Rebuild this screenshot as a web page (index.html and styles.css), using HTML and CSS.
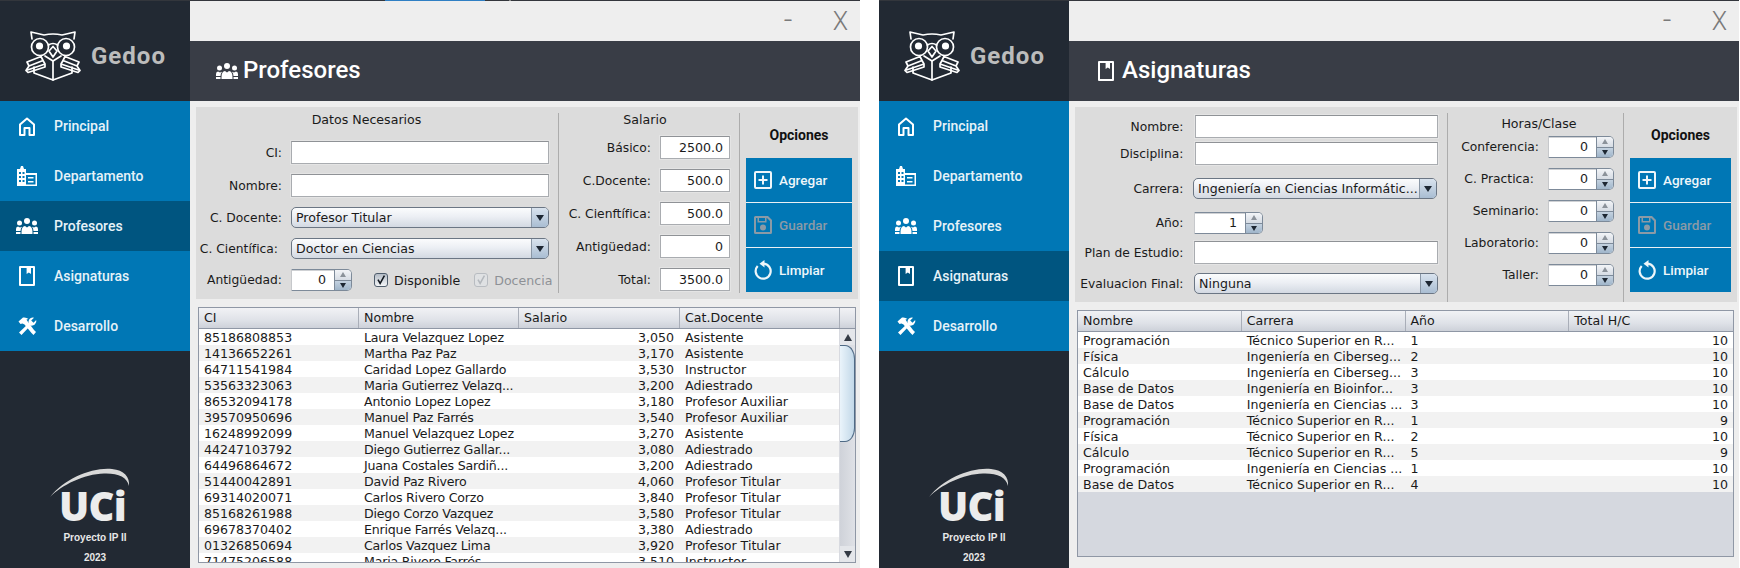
FILE: index.html
```html
<!DOCTYPE html>
<html lang="es">
<head>
<meta charset="utf-8">
<title>Gedoo</title>
<link rel="stylesheet" href="styles.css">
</head>
<body>
<svg class="defs" xmlns="http://www.w3.org/2000/svg">
  <symbol id="i-owl" viewBox="0 0 56 50">
    <g fill="none" stroke="currentColor" stroke-width="1.7" stroke-linejoin="round" stroke-linecap="round">
      <path d="M7 8 L6 1 L19 4 Q28 2 37 4 L50 1 L49 8"/>
      <circle cx="15" cy="16" r="8.5"/>
      <circle cx="41" cy="16" r="8.5"/>
      <path d="M23.5 14 Q28 11 32.5 14 M24 20 L28 15.5 L32 20 L28 26 Z"/>
      <path d="M9 36 V42 L28 49 L47 42 V36"/>
      <path d="M28 30 V49"/>
      <path d="M20 25 L28 30 L36 25"/>
      <path d="M2 31 L16 25.500 L18 29.500 L4 35 Z M4 35 L18 29.500 L20 33 L1 39.500 Z M1 39.500 L20 33 L20 36 L3 41.500 Z"/>
      <path d="M54 31 L40 25.500 L38 29.500 L52 35 Z M52 35 L38 29.500 L36 33 L55 39.500 Z M55 39.500 L36 33 L36 36 L53 41.500 Z"/>
    </g>
    <circle cx="14.500" cy="15" r="3.600" fill="currentColor"/>
    <circle cx="41.500" cy="15" r="3.600" fill="currentColor"/>
  </symbol>
  <symbol id="i-home" viewBox="0 0 18 19">
    <path d="M2 18 V7.5 L9 1.5 L16 7.5 V18 H11.5 V11 H6.5 V18 Z" fill="none" stroke="currentColor" stroke-width="2" stroke-linejoin="round"/>
  </symbol>
  <symbol id="i-building" viewBox="0 0 20 20">
    <path fill="currentColor" fill-rule="evenodd" d="M3 3 L4 0 H6 L7 3 H9 V7 H20 V20 H0 V3 Z M2 6 V8 H4 V6 Z M5.5 6 V8 H7.5 V6 Z M2 10 V12 H4 V10 Z M5.5 10 V12 H7.5 V10 Z M2 14 V16 H4 V14 Z M5.5 14 V16 H7.5 V14 Z M9 9 V18.5 H18.5 V9 Z M11 11 H16.500 V12.500 H11 Z M11 15 H16.500 V16.500 H11 Z"/>
  </symbol>
  <symbol id="i-users" viewBox="0 0 22 16">
    <g fill="currentColor">
      <circle cx="11" cy="3" r="3"/>
      <circle cx="3.500" cy="5" r="2.500"/>
      <circle cx="18.500" cy="5" r="2.500"/>
      <path d="M5.500 16 V14 Q5.500 8.500 9 8 L11 9.500 L13 8 Q16.500 8.500 16.500 14 V16 Z"/>
      <path d="M0 13 V11 Q0 8.500 2 8.500 L4 9.500 L6 8.800 Q4.500 10.500 4.500 13 Z"/>
      <path d="M22 13 V11 Q22 8.500 20 8.500 L18 9.500 L16 8.800 Q17.500 10.500 17.500 13 Z"/>
      <path d="M0 14 H4.500 V16 H0 Z M17.500 14 H22 V16 H17.500 Z"/>
    </g>
  </symbol>
  <symbol id="i-book" viewBox="0 0 16 20">
    <path fill="currentColor" fill-rule="evenodd" d="M1 0 H15 A1 1 0 0 1 16 1 V19 A1 1 0 0 1 15 20 H1 A1 1 0 0 1 0 19 V1 A1 1 0 0 1 1 0 Z M2 2 V18 H14 V2 H12 V8 L9.800 6.500 L7.600 8 V2 Z"/>
  </symbol>
  <symbol id="i-tools" viewBox="0 0 19 19">
    <g fill="currentColor" stroke="none">
      <path d="M0.500 4.500 L5 0.500 Q8.500 0 10.500 2 L8.500 2.500 L10 5 L16 13 L18 15 L15.500 18 L13.500 16 L6.500 7.500 L4.500 6.500 L2.500 7 Z"/>
      <path d="M1 15.500 L10.500 6.500 Q10 2 13.500 0.800 Q15 0.300 16 0.800 L13.200 3.500 L15.500 5.800 L18.200 3 Q19 5.500 16.800 7.500 Q15 9 12.500 8.500 L3.500 18 Z"/>
    </g>
  </symbol>
  <symbol id="i-plus" viewBox="0 0 18 18">
    <rect x="1" y="1" width="16" height="16" rx="1" fill="none" stroke="currentColor" stroke-width="2"/>
    <path d="M9 4.500 V13.500 M4.500 9 H13.500" fill="none" stroke="currentColor" stroke-width="2"/>
  </symbol>
  <symbol id="i-save" viewBox="0 0 18 18">
    <path fill="currentColor" fill-rule="evenodd" d="M1.500 0 H14 L18 4 V16.500 Q18 18 16.500 18 H1.500 Q0 18 0 16.500 V1.500 Q0 0 1.500 0 Z M2 2 V16 H16 V5 L13 2 H12.500 V6.500 H3.500 V2 Z M5 2 V5 H11 V2 Z"/>
    <circle cx="9" cy="11.500" r="3" fill="currentColor"/>
  </symbol>
  <symbol id="i-reset" viewBox="0 0 18 20">
    <path d="M10 3.700 A7.500 7.500 0 1 1 3.700 6" fill="none" stroke="currentColor" stroke-width="2.200"/>
    <path d="M10.500 0 L5.500 3.700 L10.500 7.500 Z" fill="currentColor"/>
  </symbol>
</svg>

<section class="window">
  <div class="strip strip-left"></div>
  <div class="app">
    <aside class="sidebar">
      <div class="brand">
        <svg class="owl"><use href="#i-owl"/></svg>
        <span class="brand-name">Gedoo</span>
      </div>
      <nav class="nav">
        <a class="nav-item"><span class="nav-icon"><svg class="ic-home"><use href="#i-home"/></svg></span>Principal</a>
        <a class="nav-item"><span class="nav-icon"><svg class="ic-building"><use href="#i-building"/></svg></span>Departamento</a>
        <a class="nav-item active"><span class="nav-icon"><svg class="ic-users"><use href="#i-users"/></svg></span>Profesores</a>
        <a class="nav-item"><span class="nav-icon"><svg class="ic-book"><use href="#i-book"/></svg></span>Asignaturas</a>
        <a class="nav-item"><span class="nav-icon"><svg class="ic-tools"><use href="#i-tools"/></svg></span>Desarrollo</a>
      </nav>
      <div class="uci">
        <svg class="uci-logo" viewBox="0 0 90 62" xmlns="http://www.w3.org/2000/svg">
          <path class="swoosh" d="M0 30 C14 12 42 0 62 2 C74 3 80 10 79 19 C77 10 68 6 54 6.500 C34 7 12 18 0 30 Z"/>
          <text class="uci-text" x="9" y="54">UCi</text>
        </svg>
        <div class="uci-line">Proyecto IP II</div>
        <div class="uci-year">2023</div>
      </div>
    </aside>
    <main class="main">
      <div class="winbar"><span class="win-min">-</span><span class="win-close">X</span></div>
      <header class="title"><span class="title-icon"><svg class="ic-users"><use href="#i-users"/></svg></span><h1>Profesores</h1></header>
      <div class="form form-prof">
        <div class="sec sec-datos">
          <div class="sec-title sec-title-datos">Datos Necesarios</div>
          <div class="row"><label>CI:</label><input class="in wide" type="text"></div>
          <div class="row"><label>Nombre:</label><input class="in wide" type="text"></div>
          <div class="row"><label>C. Docente:</label><div class="combo wide"><span>Profesor Titular</span><i></i></div></div>
          <div class="row"><label class="pad4">C. Científica:</label><div class="combo wide"><span>Doctor en Ciencias</span><i></i></div></div>
          <div class="row row-22">
            <label>Antigüedad:</label>
            <div class="spin spin-61"><span>0</span><i><b class="up"></b><b class="down"></b></i></div>
            <span class="check chk-a"><svg viewBox="0 0 14 14"><path d="M3.500 6.500 L6 11 L11 2"/></svg></span><span class="chk-label">Disponible</span>
            <span class="check disabled chk-b"><svg viewBox="0 0 14 14"><path d="M3.500 6.500 L6 11 L11 2"/></svg></span><span class="chk-label off">Docencia</span>
          </div>
        </div>
        <div class="sec sec-sal">
          <div class="sec-title sec-title-sal">Salario</div>
          <div class="row"><label>Básico:</label><input class="in num" type="text" value="2500.0"></div>
          <div class="row"><label>C.Docente:</label><input class="in num" type="text" value="500.0"></div>
          <div class="row"><label>C. Cienftífica:</label><input class="in num" type="text" value="500.0"></div>
          <div class="row"><label>Antigüedad:</label><input class="in num" type="text" value="0"></div>
          <div class="row"><label>Total:</label><input class="in num" type="text" value="3500.0"></div>
        </div>
        <div class="sec-ops">
          <div class="ops-title">Opciones</div>
          <div class="ops-btns">
            <button class="op"><svg><use href="#i-plus"/></svg>Agregar</button>
            <button class="op off"><svg><use href="#i-save"/></svg>Guardar</button>
            <button class="op"><svg><use href="#i-reset"/></svg>Limpiar</button>
          </div>
        </div>
      </div>
      <div class="tablebox tb-prof">
        <div class="thead thead-prof"><span>CI</span><span>Nombre</span><span>Salario</span><span>Cat.Docente</span><span class="corner"></span></div>
        <div class="tbody">
          <table>
            <tr><td>85186808853</td><td>Laura Velazquez Lopez</td><td class="r">3,050</td><td>Asistente</td></tr>
            <tr><td>14136652261</td><td>Martha Paz Paz</td><td class="r">3,170</td><td>Asistente</td></tr>
            <tr><td>64711541984</td><td>Caridad Lopez Gallardo</td><td class="r">3,530</td><td>Instructor</td></tr>
            <tr><td>53563323063</td><td>Maria Gutierrez Velazq...</td><td class="r">3,200</td><td>Adiestrado</td></tr>
            <tr><td>86532094178</td><td>Antonio Lopez Lopez</td><td class="r">3,180</td><td>Profesor Auxiliar</td></tr>
            <tr><td>39570950696</td><td>Manuel Paz Farrés</td><td class="r">3,540</td><td>Profesor Auxiliar</td></tr>
            <tr><td>16248992099</td><td>Manuel Velazquez Lopez</td><td class="r">3,270</td><td>Asistente</td></tr>
            <tr><td>44247103792</td><td>Diego Gutierrez Gallar...</td><td class="r">3,080</td><td>Adiestrado</td></tr>
            <tr><td>64496864672</td><td>Juana Costales Sardiñ...</td><td class="r">3,200</td><td>Adiestrado</td></tr>
            <tr><td>51440042891</td><td>David Paz Rivero</td><td class="r">4,060</td><td>Profesor Titular</td></tr>
            <tr><td>69314020071</td><td>Carlos Rivero Corzo</td><td class="r">3,840</td><td>Profesor Titular</td></tr>
            <tr><td>85168261988</td><td>Diego Corzo Vazquez</td><td class="r">3,580</td><td>Profesor Titular</td></tr>
            <tr><td>69678370402</td><td>Enrique Farrés Velazq...</td><td class="r">3,380</td><td>Adiestrado</td></tr>
            <tr><td>01326850694</td><td>Carlos Vazquez Lima</td><td class="r">3,920</td><td>Profesor Titular</td></tr>
            <tr><td>71475206588</td><td>Maria Rivero Farrés</td><td class="r">3,510</td><td>Instructor</td></tr>
          </table>
          <div class="scroll">
            <div class="sc-arrow sc-up"></div>
            <div class="sc-thumb"></div>
            <div class="sc-track"></div>
            <div class="sc-arrow sc-down"></div>
          </div>
        </div>
      </div>
    </main>
  </div>
</section>

<section class="window">
  <div class="strip"></div>
  <div class="app">
    <aside class="sidebar">
      <div class="brand">
        <svg class="owl"><use href="#i-owl"/></svg>
        <span class="brand-name">Gedoo</span>
      </div>
      <nav class="nav">
        <a class="nav-item"><span class="nav-icon"><svg class="ic-home"><use href="#i-home"/></svg></span>Principal</a>
        <a class="nav-item"><span class="nav-icon"><svg class="ic-building"><use href="#i-building"/></svg></span>Departamento</a>
        <a class="nav-item"><span class="nav-icon"><svg class="ic-users"><use href="#i-users"/></svg></span>Profesores</a>
        <a class="nav-item active"><span class="nav-icon"><svg class="ic-book"><use href="#i-book"/></svg></span>Asignaturas</a>
        <a class="nav-item"><span class="nav-icon"><svg class="ic-tools"><use href="#i-tools"/></svg></span>Desarrollo</a>
      </nav>
      <div class="uci">
        <svg class="uci-logo" viewBox="0 0 90 62" xmlns="http://www.w3.org/2000/svg">
          <path class="swoosh" d="M0 30 C14 12 42 0 62 2 C74 3 80 10 79 19 C77 10 68 6 54 6.500 C34 7 12 18 0 30 Z"/>
          <text class="uci-text" x="9" y="54">UCi</text>
        </svg>
        <div class="uci-line">Proyecto IP II</div>
        <div class="uci-year">2023</div>
      </div>
    </aside>
    <main class="main">
      <div class="winbar"><span class="win-min">-</span><span class="win-close">X</span></div>
      <header class="title"><span class="title-icon"><svg class="ic-book"><use href="#i-book"/></svg></span><h1>Asignaturas</h1></header>
      <div class="form form-asig">
        <div class="sec sec-left">
          <div class="row"><label>Nombre:</label><input class="in long shift" type="text"></div>
          <div class="row mt4"><label>Disciplina:</label><input class="in long shift" type="text"></div>
          <div class="row mt13"><label>Carrera:</label><div class="combo long2"><span>Ingeniería en Ciencias Informátic...</span><i></i></div></div>
          <div class="row mt13 row-22"><label>Año:</label><div class="spin spin-69"><span>1</span><i><b class="up"></b><b class="down"></b></i></div></div>
          <div class="row mt7"><label>Plan de Estudio:</label><input class="in long" type="text"></div>
          <div class="row mt9"><label>Evaluacion Final:</label><div class="combo long"><span>Ninguna</span><i></i></div></div>
        </div>
        <div class="sec sec-horas">
          <div class="sec-title sec-title-horas">Horas/Clase</div>
          <div class="row row-22"><label>Conferencia:</label><div class="spin spin-66"><span>0</span><i><b class="up"></b><b class="down"></b></i></div></div>
          <div class="row row-22"><label class="pad5">C. Practica:</label><div class="spin spin-66"><span>0</span><i><b class="up"></b><b class="down"></b></i></div></div>
          <div class="row row-22"><label>Seminario:</label><div class="spin spin-66"><span>0</span><i><b class="up"></b><b class="down"></b></i></div></div>
          <div class="row row-22"><label>Laboratorio:</label><div class="spin spin-66"><span>0</span><i><b class="up"></b><b class="down"></b></i></div></div>
          <div class="row row-22"><label>Taller:</label><div class="spin spin-66"><span>0</span><i><b class="up"></b><b class="down"></b></i></div></div>
        </div>
        <div class="sec-ops">
          <div class="ops-title">Opciones</div>
          <div class="ops-btns">
            <button class="op"><svg><use href="#i-plus"/></svg>Agregar</button>
            <button class="op off"><svg><use href="#i-save"/></svg>Guardar</button>
            <button class="op"><svg><use href="#i-reset"/></svg>Limpiar</button>
          </div>
        </div>
      </div>
      <div class="tablebox tb-asig">
        <div class="thead thead-asig"><span>Nombre</span><span>Carrera</span><span>Año</span><span>Total H/C</span></div>
        <div class="tbody">
          <table>
            <tr><td>Programación</td><td>Técnico Superior en R...</td><td>1</td><td class="r">10</td></tr>
            <tr><td>Física</td><td>Ingeniería en Ciberseg...</td><td>2</td><td class="r">10</td></tr>
            <tr><td>Cálculo</td><td>Ingeniería en Ciberseg...</td><td>3</td><td class="r">10</td></tr>
            <tr><td>Base de Datos</td><td>Ingeniería en Bioinfor...</td><td>3</td><td class="r">10</td></tr>
            <tr><td>Base de Datos</td><td>Ingeniería en Ciencias ...</td><td>3</td><td class="r">10</td></tr>
            <tr><td>Programación</td><td>Técnico Superior en R...</td><td>1</td><td class="r">9</td></tr>
            <tr><td>Física</td><td>Técnico Superior en R...</td><td>2</td><td class="r">10</td></tr>
            <tr><td>Cálculo</td><td>Técnico Superior en R...</td><td>5</td><td class="r">9</td></tr>
            <tr><td>Programación</td><td>Ingeniería en Ciencias ...</td><td>1</td><td class="r">10</td></tr>
            <tr><td>Base de Datos</td><td>Técnico Superior en R...</td><td>4</td><td class="r">10</td></tr>
          </table>
        </div>
      </div>
    </main>
  </div>
</section>
</body>
</html>
```

FILE: styles.css
```css
* { box-sizing: border-box; }
html, body { margin: 0; height: 100%; }
body {
  display: flex;
  gap: 19px;
  width: 1740px;
  height: 568px;
  overflow: hidden;
  background: #fff;
  font-family: "DejaVu Sans", sans-serif;
  font-size: 12.6px;
  color: #1a1a1a;
}
.defs { display: none; }

.window { width: 860px; height: 568px; display: flex; flex-direction: column; flex: none; }
.strip { height: 1px; background: #33363c; flex: none; }
.strip-left { background: linear-gradient(90deg, #33363c 385px, #2f7fc4 385px, #2f7fc4 485px, #33363c 485px, #33363c 509px, #8a8a8a 509px, #8a8a8a 511px, #33363c 511px); }
.app { flex: 1; display: flex; min-height: 0; }

/* sidebar */
.sidebar { width: 190px; flex: none; background: #222933; display: flex; flex-direction: column; }
.brand { height: 100px; display: flex; align-items: center; padding: 9px 0 0 25px; gap: 10px; }
.owl { width: 56px; height: 50px; color: #fff; }
.brand-name { font-family: Roboto, sans-serif; font-weight: 700; font-size: 24px; letter-spacing: 1px; color: #bcbcbc; }
.nav { display: flex; flex-direction: column; }
.nav-item {
  height: 50px; display: flex; align-items: center;
  background: #0077b5; color: #e6f2f8;
  font-family: Roboto, sans-serif; font-weight: 500; font-size: 14px;
}
.nav-item.active { background: #005580; }
.nav-icon { width: 54px; display: flex; justify-content: center; align-items: center; color: #fff; flex: none; }
.ic-home { width: 18px; height: 19px; }
.ic-building { width: 20px; height: 20px; }
.ic-users { width: 22px; height: 16px; }
.ic-book { width: 16px; height: 20px; }
.ic-tools { width: 19px; height: 19px; }

.uci { margin-top: auto; padding-bottom: 4px; display: flex; flex-direction: column; align-items: center; color: #e8e8e8; }
.uci-logo { width: 90px; height: 62px; display: block; overflow: visible; }
.swoosh { fill: #d8d8d8; }
.uci-text { font-family: "Open Sans", sans-serif; font-weight: 800; font-size: 40px; letter-spacing: -.8px; fill: #ececec; }
.uci-line { font-family: "Liberation Sans", sans-serif; font-weight: 700; font-size: 10px; margin-top: 3px; line-height: 12px; }
.uci-year { font-family: "Liberation Sans", sans-serif; font-weight: 700; font-size: 10px; margin-top: 8px; line-height: 12px; }

/* main */
.main { flex: 1; background: #eeeeee; display: flex; flex-direction: column; min-width: 0; }
.winbar { height: 40px; flex: none; display: flex; justify-content: flex-end; align-items: center; padding-right: 11px; color: #7a7a7a; font-family: Roboto, sans-serif; font-weight: 300; }
.win-min { font-size: 30px; width: 14px; text-align: center; margin-right: 37px; line-height: 30px; padding-bottom: 3px; }
.win-close { font-size: 25px; width: 17px; text-align: center; }
.title { height: 60px; flex: none; background: #393d46; color: #fff; display: flex; align-items: center; padding: 0 0 1px 26px; }
.title-icon { width: 22px; display: flex; justify-content: center; margin-right: 5px; }
.title h1 { margin: 0; font-family: Roboto, sans-serif; font-weight: 500; font-size: 24px; line-height: 28px; padding-bottom: 1px; }

/* form */
.form { margin: 6px 2px 0 6px; background: #dcdcdc; display: flex; padding-top: 6px; flex: none; }
.form-prof { height: 192px; }
.form-asig { height: 195px; }
.sec { border-right: 1px solid #acacac; display: flex; flex-direction: column; }
.form-prof .sec { height: 180px; gap: 10px; }
.sec-title { height: 14px; line-height: 14px; text-align: center; }
.row { display: flex; align-items: center; height: 23px; flex: none; }
.row-22 { height: 22px; }
.row label { flex: none; text-align: right; white-space: nowrap; font-size: 12.3px; }
.pad4 { padding-right: 4px; }
.pad5 { padding-right: 5px; }

.sec-datos { width: 363px; }
.sec-title-datos { width: 341px; margin-bottom: 4px; }
.sec-datos .row label { width: 86px; margin-right: 9px; }
.sec-datos .combo.wide { height: 21px; }
.sec-datos .row:nth-child(4), .sec-datos .row:nth-child(5) { height: 21px; }
.wide { width: 258px; }

.sec-sal { width: 181px; }
.sec-title-sal { width: 172px; margin-bottom: -1px; }
.sec-sal .row label { width: 92px; margin-right: 9px; }
.num { width: 70px; text-align: right; }

.in { height: 23px; border: 1px solid #a9acb0; border-top-color: #8f9296; border-radius: 0; background: #fff; font: inherit; color: inherit; padding: 0 6px; box-shadow: 0 0 0 1px #e4e4e4; outline: none; }

.combo {
  height: 21px; flex: none; display: flex; border: 1px solid #6b7684; border-radius: 5px;
  background: linear-gradient(#fbfcfd, #eceff4 45%, #d3d9e2);
  overflow: hidden;
}
.combo span { flex: 1; padding-left: 4px; line-height: 19px; white-space: nowrap; overflow: hidden; }
.combo i { width: 17px; flex: none; border-left: 1px solid #8a97a6; background: linear-gradient(#d9e3ee, #a9bdd2); display: flex; align-items: center; justify-content: center; }
.combo i::after { content: ""; border-left: 4px solid transparent; border-right: 4px solid transparent; border-top: 6px solid #1d2733; }

.spin { height: 22px; flex: none; display: flex; border: 1px solid #7d8a99; border-left-color: #c6c8cb; border-radius: 0 5px 5px 0; background: #fff; overflow: hidden; }
.spin span { flex: 1; text-align: right; padding-right: 8px; line-height: 20px; box-shadow: inset 0 1px 0 #cfd1d4; }
.spin i { width: 17px; flex: none; display: flex; flex-direction: column; border-left: 1px solid #7d8a99; }
.spin b { flex: 1; display: flex; align-items: center; justify-content: center; }
.spin .up { background: linear-gradient(#f2f4f7, #d6dce4); border-bottom: 1px solid #7d8a99; }
.spin .down { background: linear-gradient(#c4d2e0, #9fb5ca); }
.spin .up::after { content: ""; border-left: 3.500px solid transparent; border-right: 3.500px solid transparent; border-bottom: 5px solid #8b929a; }
.spin .down::after { content: ""; border-left: 3.500px solid transparent; border-right: 3.500px solid transparent; border-top: 5px solid #1d2733; }
.spin-61 { width: 61px; }
.spin-66 { width: 66px; }
.spin-69 { width: 69px; }

.check { width: 14px; height: 14px; flex: none; border: 1px solid #4f5d6c; border-radius: 3px; background: linear-gradient(#b4bcc6, #f3f5f7); display: block; }
.check svg { display: block; width: 12px; height: 12px; }
.check path { fill: none; stroke: #10161d; stroke-width: 1.800; }
.check.disabled { border-color: #b8bcc1; background: #dfe1e3; }
.check.disabled path { stroke: #b4b8bd; }
.chk-a { margin-left: 22px; }
.chk-b { margin-left: 14px; }
.chk-label { margin-left: 6px; white-space: nowrap; }
.chk-label.off { color: #8e9196; }

.sec-ops { flex: 1; display: flex; flex-direction: column; align-items: center; padding: 0 6px; min-width: 0; }
.ops-title { font-family: Roboto, sans-serif; font-weight: 700; font-size: 14px; line-height: 16px; margin-top: 14px; height: 31px; color: #111; }
.ops-btns { width: 100%; display: flex; flex-direction: column; gap: 1px; background: #eaf0f4; }
.op { height: 44px; border: 0; background: #0077b5; color: #eef6fa; font-family: Roboto, sans-serif; font-weight: 500; font-size: 13.500px; display: flex; align-items: center; gap: 7px; padding: 0 0 0 8px; }
.op svg { width: 18px; height: 20px; flex: none; }
.op.off { color: #8b9aa6; }

/* asignaturas form */
.sec-left { width: 373px; padding-top: 2px; height: 189px; }
.sec-left .row label { width: 108.500px; margin-right: 10.500px; }
.long { width: 244px; }
.long2 { width: 244px; margin-left: -1px; }
.shift { margin-left: 1px; width: 243px; }
.mt4 { margin-top: 4px; }
.mt7 { margin-top: 7px; }
.mt9 { margin-top: 9px; }
.mt13 { margin-top: 13px; }
.sec-left .row:nth-child(3), .sec-left .row:nth-child(6) { height: 21px; }

.sec-horas { width: 176px; height: 189px; gap: 10px; }
.sec-title-horas { width: 182px; margin-top: 4px; margin-bottom: -5px; }
.sec-horas .row label { width: 91px; margin-right: 9px; }

/* tables */
.tablebox { margin: 8px 0 0 8px; border: 1px solid #8f97a5; background: #d5d8df; flex: none; overflow: hidden; }
.tb-prof { width: 658px; height: 256px; }
.tb-asig { width: 657px; height: 247px; }
.thead { height: 21px; display: grid; background: linear-gradient(#f1f2f5, #dfe2e8 60%, #cdd1d9); border-bottom: 1px solid #8f97a5; }
.thead-prof { grid-template-columns: 160px 160px 161px 160px 1fr; }
.thead-asig { grid-template-columns: repeat(4, 1fr); }
.thead span { padding-left: 5px; line-height: 19px; border-right: 1px solid #a9aeb8; }
.thead span:last-child { border-right: 0; }
.tbody { display: flex; height: calc(100% - 21px); overflow: hidden; }
table { width: 100%; height: 0; border-collapse: collapse; table-layout: fixed; align-self: flex-start; }
.tb-prof table { flex: 1; min-width: 0; }
tr { height: 16px; background: #fff; }
tr:nth-child(even) { background: #f2f2f2; }
td { padding: 1px 5px 0; height: 16px; line-height: 15px; white-space: nowrap; overflow: hidden; }
td.r { text-align: right; }
.tb-prof td:nth-child(2) { letter-spacing: -.2px; }
.tb-prof td:nth-child(4) { padding-left: 6px; }

.scroll { width: 16px; flex: none; display: flex; flex-direction: column; background: linear-gradient(90deg, #cfd2d9, #dfe1e6); border-left: 1px solid #d8dae0; }
.sc-arrow { height: 16px; flex: none; display: flex; justify-content: center; align-items: center; background: #e4e6ea; }
.sc-up::after { content: ""; border-left: 4px solid transparent; border-right: 4px solid transparent; border-bottom: 7px solid #333a44; }
.sc-down::after { content: ""; border-left: 4px solid transparent; border-right: 4px solid transparent; border-top: 7px solid #333a44; }
.sc-thumb { height: 97px; flex: none; border: 1px solid #4f6a85; border-left: 0; border-radius: 0 10px 10px 0 / 0 14px 14px 0; background: linear-gradient(90deg, #eaf4fb, #c2d8e8); }
.sc-track { flex: 1; }
```
